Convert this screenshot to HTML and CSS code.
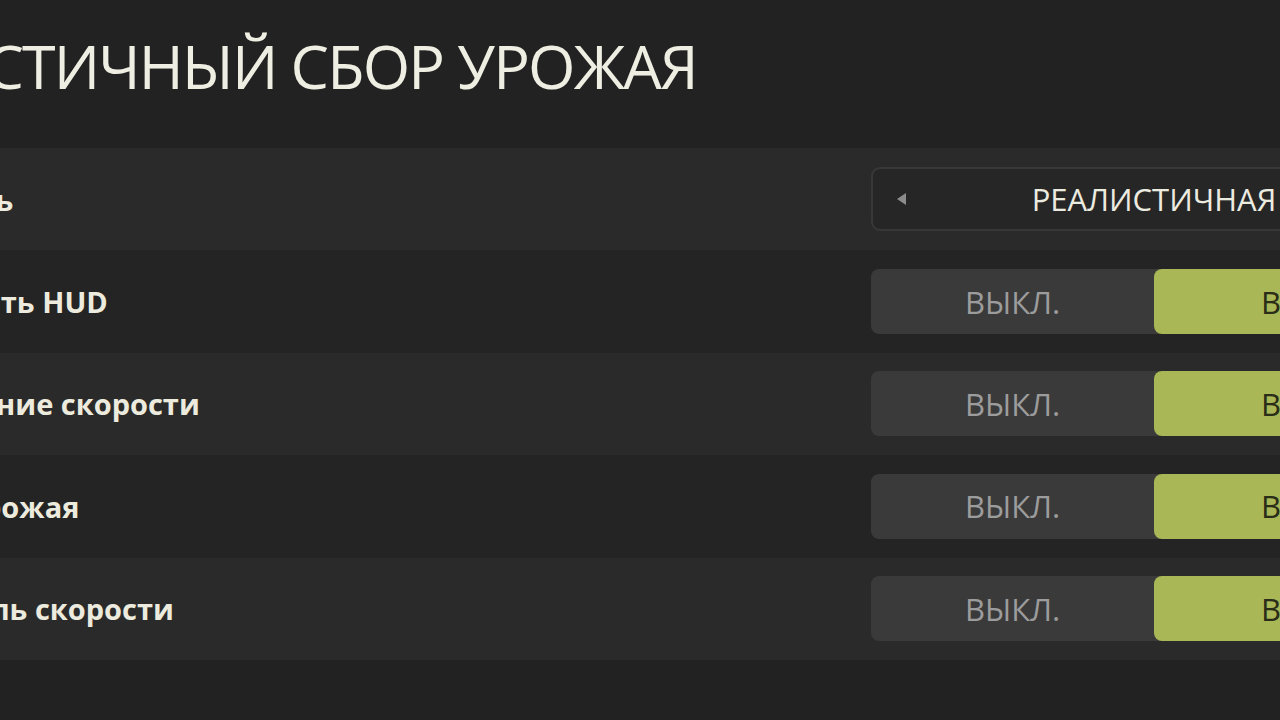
FILE: index.html
```html
<!DOCTYPE html>
<html lang="ru">
<head>
<meta charset="utf-8">
<title>Реалистичный сбор урожая</title>
<link rel="stylesheet" href="styles.css">
</head>
<body>
<div class="page">
  <header class="header">
    <h1 class="title">РЕАЛИСТИЧНЫЙ СБОР УРОЖАЯ</h1>
  </header>
  <div class="list">
    <div class="row odd">
      <div class="label">Сложность</div>
      <div class="selector">
        <span class="arrow arrow-left"></span>
        <span class="sel-text">РЕАЛИСТИЧНАЯ</span>
        <span class="arrow arrow-right"></span>
      </div>
    </div>
    <div class="row even">
      <div class="label">Отображать HUD</div>
      <div class="toggle"><span class="opt off">ВЫКЛ.</span><span class="opt on">ВКЛ.</span></div>
    </div>
    <div class="row odd">
      <div class="label">Ограничение скорости</div>
      <div class="toggle"><span class="opt off">ВЫКЛ.</span><span class="opt on">ВКЛ.</span></div>
    </div>
    <div class="row even">
      <div class="label">Потери урожая</div>
      <div class="toggle"><span class="opt off">ВЫКЛ.</span><span class="opt on">ВКЛ.</span></div>
    </div>
    <div class="row odd">
      <div class="label">Множитель скорости</div>
      <div class="toggle"><span class="opt off">ВЫКЛ.</span><span class="opt on">ВКЛ.</span></div>
    </div>
  </div>
</div>
</body>
</html>
```
FILE: styles.css
```css
html, body {
  margin: 0;
  padding: 0;
}
body {
  width: 1280px;
  height: 720px;
  overflow: hidden;
  background: #222222;
  font-family: "Open Sans", "Noto Sans", "DejaVu Sans", sans-serif;
}
.page {
  margin-left: -220px;
  width: 1720px;
}
.header {
  height: 148px;
  display: flex;
  align-items: flex-start;
}
.title {
  margin: 0;
  padding-left: 16px;
  padding-top: 26px;
  font-size: 61px;
  font-weight: 400;
  line-height: 80px;
  color: #efeee2;
  letter-spacing: -1.8px;
  white-space: nowrap;
}
.list {
  display: flex;
  flex-direction: column;
}
.row {
  height: 102.4px;
  display: grid;
  grid-template-columns: 1fr 566px;
  align-items: center;
  padding-right: 63px;
  padding-left: 67px;
}
.row.odd { background: #2a2a2a; }
.row.even { background: #242424; }
.label {
  font-size: 29px;
  font-weight: 700;
  color: #ecebde;
  white-space: nowrap;
}
.selector {
  height: 60px;
  border: 2px solid #383838;
  border-radius: 9px;
  background: #262626;
  display: flex;
  align-items: center;
  justify-content: space-between;
  padding: 0 24px;
}
.sel-text {
  font-size: 31px;
  color: #ecebe0;
}
.arrow {
  width: 0;
  height: 0;
  border-top: 6px solid transparent;
  border-bottom: 6px solid transparent;
}
.arrow-left { border-right: 9px solid #8c8c8c; }
.arrow-right { border-left: 9px solid #8c8c8c; }
.toggle {
  height: 65px;
  border-radius: 8px;
  background: #3a3a3a;
  display: grid;
  grid-template-columns: 1fr 1fr;
}
.opt {
  display: flex;
  align-items: center;
  justify-content: center;
  font-size: 31px;
  border-radius: 8px;
}
.opt.off { color: #9c9c9c; }
.opt.on {
  background: #a9b756;
  color: #2a2d18;
}
```
